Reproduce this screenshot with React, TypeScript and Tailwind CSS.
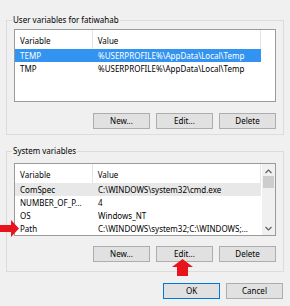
import React from "react";

type Row = { name: string; value: string; sel?: "blue" | "gray" };

function Header({ h }: { h: string }) {
  return (
    <div className={`flex ${h} items-center bg-white`}>
      <div className="w-[77px] pl-[5px] pt-[2px]">Variable</div>
      <div className="w-px h-full bg-[#e5e5e5]" />
      <div className="w-[168px] pl-[5px] pt-[2px]">Value</div>
      <div className="w-px h-full bg-[#e5e5e5]" />
    </div>
  );
}

function RowView({ r }: { r: Row }) {
  const bg =
    r.sel === "blue" ? "bg-[#3393f0] text-white" : r.sel === "gray" ? "bg-[#e8e8e8]" : "";
  return (
    <div className={`flex w-[246px] h-[13px] items-center whitespace-nowrap ${bg}`}>
      <div className="w-[77px] pl-[5px] overflow-hidden">{r.name}</div>
      <div className="w-[169px] pl-[6px] overflow-hidden">{r.value}</div>
    </div>
  );
}

function Btn({ label, primary }: { label: string; primary?: boolean }) {
  return (
    <div
      className={`w-[57px] h-[16px] flex items-center justify-center bg-[#e1e1e1] border ${
        primary ? "border-[#0078d7]" : "border-[#adadad]"
      }`}
    >
      {label}
    </div>
  );
}

function Chevron({ up }: { up?: boolean }) {
  return (
    <svg width="7" height="5" viewBox="0 0 7 5">
      <path
        d={up ? "M0.5 4 L3.5 1 L6.5 4" : "M0.5 1 L3.5 4 L6.5 1"}
        fill="none"
        stroke="#606060"
        strokeWidth="1.2"
      />
    </svg>
  );
}

export default function App() {
  const userRows: Row[] = [
    { name: "TEMP", value: "%USERPROFILE%\\AppData\\Local\\Temp", sel: "blue" },
    { name: "TMP", value: "%USERPROFILE%\\AppData\\Local\\Temp" },
  ];
  const sysRows: Row[] = [
    { name: "ComSpec", value: "C:\\WINDOWS\\system32\\cmd.exe", sel: "gray" },
    { name: "NUMBER_OF_P...", value: "4" },
    { name: "OS", value: "Windows_NT" },
    { name: "Path", value: "C:\\WINDOWS\\system32;C:\\WINDOWS;..." },
  ];
  return (
    <div className="relative w-[290px] h-[306px] bg-[#f0f0f0] overflow-hidden text-[8px] leading-[12px] text-black font-['Noto_Sans',sans-serif] px-[6px] pt-[14px]">
      {/* User variables */}
      <fieldset className="border border-[#dcdcdc] px-[7px] pt-[3px] pb-[5px]">
        <legend className="-ml-[2px] px-[1px] leading-[12px]">User variables for fatiwahab</legend>
        <div className="h-[73px] bg-white border border-[#9a9a9a] flex">
          <div className="flex-1 flex flex-col">
            <div className="w-[246px]">
              <Header h="h-[19px]" />
            </div>
            {userRows.map((r) => (
              <RowView key={r.name} r={r} />
            ))}
          </div>
        </div>
        <div className="flex justify-end gap-[6px] mt-[11px]">
          <Btn label="New..." />
          <Btn label="Edit..." />
          <Btn label="Delete" />
        </div>
      </fieldset>

      {/* System variables */}
      <fieldset className="border border-[#dcdcdc] px-[7px] pt-[6px] pb-[9px] mt-[10px]">
        <legend className="-ml-[2px] px-[1px] leading-[12px]">System variables</legend>
        <div className="h-[73px] bg-white border border-[#9a9a9a] flex">
          <div className="flex-1 flex flex-col">
            <div className="w-[246px]">
              <Header h="h-[19px]" />
            </div>
            {sysRows.map((r) => (
              <RowView key={r.name} r={r} />
            ))}
          </div>
          <div className="w-[13px] bg-[#f0f0f0] flex flex-col items-center">
            <div className="h-[12px] flex items-center justify-center pt-[2px]">
              <Chevron up />
            </div>
            <div className="w-[11px] h-[12px] bg-[#cdcdcd]" />
            <div className="flex-1" />
            <div className="h-[12px] flex items-center justify-center pb-[2px]">
              <Chevron />
            </div>
          </div>
        </div>
        <div className="flex justify-end gap-[6px] mt-[10px]">
          <Btn label="New..." />
          <Btn label="Edit..." />
          <Btn label="Delete" />
        </div>
      </fieldset>

      <div className="flex justify-end gap-[6px] mt-[11px] pr-[1px]">
        <Btn label="OK" primary />
        <Btn label="Cancel" />
      </div>

      {/* Red annotation arrows */}
      <svg className="absolute left-0 top-[220px]" width="20" height="18" viewBox="0 0 20 18">
        <polygon points="0,5 11,5 11,0 19,8.5 11,17 11,12 0,12" fill="#e8141b" />
      </svg>
      <svg className="absolute left-[171px] top-[259px]" width="23" height="18" viewBox="0 0 23 18">
        <polygon points="11.5,0 22,8 17,8 17,17 6,17 6,8 1,8" fill="#e8141b" />
      </svg>
    </div>
  );
}
